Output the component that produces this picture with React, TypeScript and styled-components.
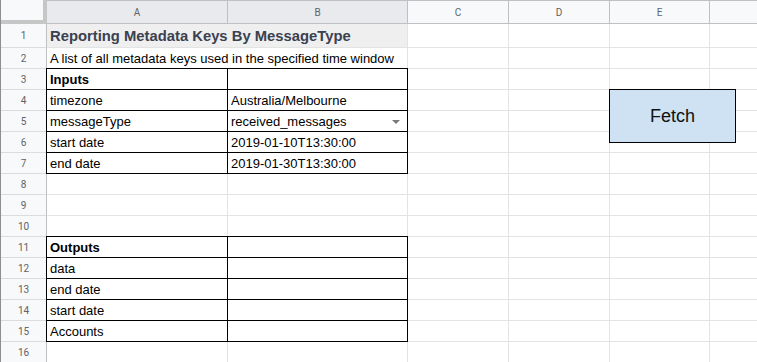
import React from "react";
import styled, { createGlobalStyle, css } from "styled-components";

const GlobalStyle = createGlobalStyle`
  html, body {
    margin: 0;
    padding: 0;
    background: #ffffff;
    overflow: hidden;
  }
  body {
    font-family: "Liberation Sans", Arial, sans-serif;
  }
`;

const columns = ["A", "B", "C", "D", "E", ""];
const selectedCols = ["A", "B"];

const Sheet = styled.div`
  position: relative;
  display: grid;
  grid-template-columns: 46px 181px 180px 101px 101px 100px 48px;
  grid-template-rows: 24px 24px repeat(15, 21px);
  width: 757px;
  height: 362px;
  overflow: hidden;
  border-left: 1px solid #8d8d8d;
  box-sizing: border-box;
`;

const Corner = styled.div`
  background: #f8f9fa;
  border-right: 4px solid #c4c7c5;
  border-bottom: 4px solid #c4c7c5;
  box-sizing: border-box;
  box-shadow: 0 1px 0 #c0c0c0, 1px 0 0 #c0c0c0;
`;

const ColHeader = styled.div<{ $selected?: boolean }>`
  display: flex;
  align-items: center;
  justify-content: center;
  background: ${(p) => (p.$selected ? "#e8eaed" : "#f8f9fa")};
  border-top: 1px solid #c0c0c0;
  border-right: 1px solid #c0c0c0;
  border-bottom: 1px solid #c0c0c0;
  box-sizing: border-box;
  font-family: Roboto, "Liberation Sans", sans-serif;
  font-size: 10px;
  color: #5f6368;
`;

const RowNumber = styled.div`
  display: flex;
  align-items: center;
  justify-content: center;
  background: #f8f9fa;
  border-right: 1px solid #c0c0c0;
  border-bottom: 1px solid #dadce0;
  box-sizing: border-box;
  font-family: Roboto, "Liberation Sans", sans-serif;
  font-size: 10px;
  color: #5f6368;
`;

const Cell = styled.div<{ $boxed?: boolean; $span?: number; $bold?: boolean; $title?: boolean }>`
  position: relative;
  display: flex;
  align-items: center;
  grid-column: span ${(p) => p.$span ?? 1};
  padding: 0 3px;
  border-right: 1px solid #e2e3e3;
  border-bottom: 1px solid #e2e3e3;
  box-sizing: border-box;
  font-size: 13px;
  color: #000000;
  white-space: nowrap;
  font-weight: ${(p) => (p.$bold ? 700 : 400)};
  ${(p) =>
    p.$boxed &&
    css`
      z-index: 1;
      border-right-color: #000000;
      border-bottom-color: #000000;
      box-shadow: -1px 0 0 #000000, 0 -1px 0 #000000, -1px -1px 0 #000000;
    `}
  ${(p) =>
    p.$title &&
    css`
      background: #efefef;
      color: #3a4150;
      font-size: 14.8px;
      font-weight: 700;
    `}
`;

const DropArrow = styled.span`
  position: absolute;
  right: 7px;
  top: 9px;
  width: 0;
  height: 0;
  border-left: 4px solid transparent;
  border-right: 4px solid transparent;
  border-top: 4px solid #7a7a7a;
`;

const FetchButton = styled.div`
  position: absolute;
  left: 608px;
  top: 89px;
  width: 127px;
  height: 54px;
  display: flex;
  align-items: center;
  justify-content: center;
  background: #cfe2f3;
  border: 1px solid #000000;
  box-sizing: border-box;
  font-size: 18px;
  color: #111111;
  z-index: 2;
`;

type Row = {
  a?: string;
  b?: string;
  boxed?: boolean;
  bold?: boolean;
  dropdown?: boolean;
};

const rows: Row[] = [
  { a: "Inputs", b: "", boxed: true, bold: true },
  { a: "timezone", b: "Australia/Melbourne", boxed: true },
  { a: "messageType", b: "received_messages", boxed: true, dropdown: true },
  { a: "start date", b: "2019-01-10T13:30:00", boxed: true },
  { a: "end date", b: "2019-01-30T13:30:00", boxed: true },
  {},
  {},
  {},
  { a: "Outputs", b: "", boxed: true, bold: true },
  { a: "data", b: "", boxed: true },
  { a: "end date", b: "", boxed: true },
  { a: "start date", b: "", boxed: true },
  { a: "Accounts", b: "", boxed: true },
  {},
];

const EmptyCells = ({ count }: { count: number }) => (
  <>
    {Array.from({ length: count }).map((_, i) => (
      <Cell key={i} />
    ))}
  </>
);

export default function App() {
  return (
    <>
      <GlobalStyle />
      <Sheet>
        <Corner />
        {columns.map((c, i) => (
          <ColHeader key={i} $selected={selectedCols.includes(c)}>
            {c}
          </ColHeader>
        ))}

        <RowNumber>1</RowNumber>
        <Cell $span={2} $title>
          Reporting Metadata Keys By MessageType
        </Cell>
        <EmptyCells count={4} />

        <RowNumber>2</RowNumber>
        <Cell $span={2}>A list of all metadata keys used in the specified time window</Cell>
        <EmptyCells count={4} />

        {rows.map((r, i) => (
          <React.Fragment key={i}>
            <RowNumber>{i + 3}</RowNumber>
            <Cell $boxed={r.boxed} $bold={r.bold}>
              {r.a}
            </Cell>
            <Cell $boxed={r.boxed}>
              {r.b}
              {r.dropdown && <DropArrow />}
            </Cell>
            <EmptyCells count={4} />
          </React.Fragment>
        ))}

        <FetchButton>Fetch</FetchButton>
      </Sheet>
    </>
  );
}
